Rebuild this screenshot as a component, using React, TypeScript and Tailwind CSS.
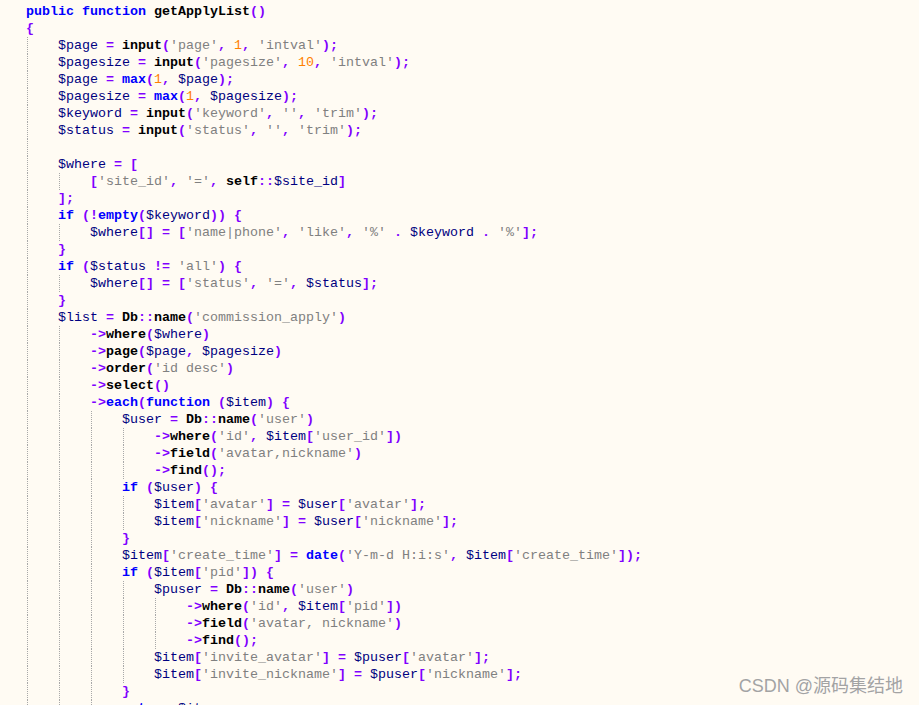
import React from 'react';

type Line = { level: number; text: string };

const lines: Line[] = [
  { level: 0, text: 'public function getApplyList()' },
  { level: 0, text: '{' },
  { level: 1, text: "$page = input('page', 1, 'intval');" },
  { level: 1, text: "$pagesize = input('pagesize', 10, 'intval');" },
  { level: 1, text: '$page = max(1, $page);' },
  { level: 1, text: '$pagesize = max(1, $pagesize);' },
  { level: 1, text: "$keyword = input('keyword', '', 'trim');" },
  { level: 1, text: "$status = input('status', '', 'trim');" },
  { level: 1, text: '' },
  { level: 1, text: '$where = [' },
  { level: 2, text: "['site_id', '=', self::$site_id]" },
  { level: 1, text: '];' },
  { level: 1, text: 'if (!empty($keyword)) {' },
  { level: 2, text: "$where[] = ['name|phone', 'like', '%' . $keyword . '%'];" },
  { level: 1, text: '}' },
  { level: 1, text: "if ($status != 'all') {" },
  { level: 2, text: "$where[] = ['status', '=', $status];" },
  { level: 1, text: '}' },
  { level: 1, text: "$list = Db::name('commission_apply')" },
  { level: 2, text: '->where($where)' },
  { level: 2, text: '->page($page, $pagesize)' },
  { level: 2, text: "->order('id desc')" },
  { level: 2, text: '->select()' },
  { level: 2, text: '->each(function ($item) {' },
  { level: 3, text: "$user = Db::name('user')" },
  { level: 4, text: "->where('id', $item['user_id'])" },
  { level: 4, text: "->field('avatar,nickname')" },
  { level: 4, text: '->find();' },
  { level: 3, text: 'if ($user) {' },
  { level: 4, text: "$item['avatar'] = $user['avatar'];" },
  { level: 4, text: "$item['nickname'] = $user['nickname'];" },
  { level: 3, text: '}' },
  { level: 3, text: "$item['create_time'] = date('Y-m-d H:i:s', $item['create_time']);" },
  { level: 3, text: "if ($item['pid']) {" },
  { level: 4, text: "$puser = Db::name('user')" },
  { level: 5, text: "->where('id', $item['pid'])" },
  { level: 5, text: "->field('avatar, nickname')" },
  { level: 5, text: '->find();' },
  { level: 4, text: "$item['invite_avatar'] = $puser['avatar'];" },
  { level: 4, text: "$item['invite_nickname'] = $puser['nickname'];" },
  { level: 3, text: '}' },
  { level: 3, text: 'return $item;' },
];

const keywords = new Set(['public', 'function', 'if', 'empty', 'max', 'each', 'date', 'return']);

// notepad++ php colours
function tokenClass(tok: string) {
  if (/^\s+$/.test(tok)) return '';
  if (tok.startsWith('$')) return 'text-[#000080]';
  if (tok.startsWith("'")) return 'text-[#808080]';
  if (/^\d+$/.test(tok)) return 'text-[#ff8000]';
  if (/^[A-Za-z_]\w*$/.test(tok)) {
    return keywords.has(tok) ? 'text-[#0000ff] font-bold' : 'text-black font-bold';
  }
  return 'text-[#8000ff] font-bold';
}

const CodeLine: React.FC<{ line: Line; guides: number }> = ({ line, guides }) => {
  const tokens = line.text.match(/\$\w+|'[^']*'|\d+|[A-Za-z_]\w*|\s+|[^\sA-Za-z0-9_$']+/g) ?? [];
  return (
    <div className="flex h-[17px] items-center whitespace-pre">
      {Array.from({ length: guides }).map((_, i) => (
        <span key={i} className="ml-px h-[17px] w-[31px] shrink-0 border-l border-dotted border-[#a8a8a8]" />
      ))}
      <span>
        {tokens.map((t, i) => (
          <span key={i} className={tokenClass(t)}>
            {t}
          </span>
        ))}
      </span>
    </div>
  );
};

export default function App() {
  return (
    <div className="relative h-[705px] w-[919px] overflow-hidden bg-[#fffbf3]">
      <div className="pl-[26px] pt-[3px] font-['Liberation_Mono','Courier_New',monospace] text-[13.33px] leading-[17px]">
        {lines.map((line, i) => (
          <CodeLine key={i} line={line} guides={line.text === '' ? 1 : line.level} />
        ))}
      </div>
      <div className="absolute bottom-[8px] right-[16px] font-['Liberation_Sans','Noto_Sans_CJK_SC',sans-serif] text-[18px] leading-[22px] text-[#a3a3a3] [text-shadow:0_0_1px_#ffffff]">
        CSDN @源码集结地
      </div>
    </div>
  );
}
